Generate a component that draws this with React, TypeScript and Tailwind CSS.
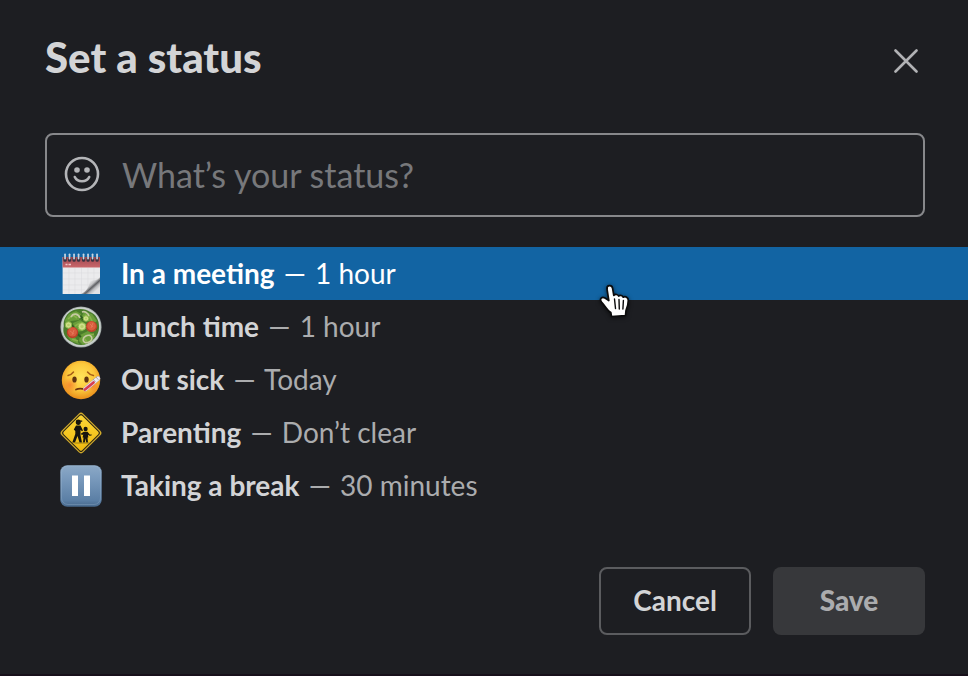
import type { ReactNode } from "react";

function CalendarIcon() {
  return (
    <svg viewBox="0 0 42 42" className="size-[42px]" aria-hidden="true">
      <defs>
        <linearGradient id="cal-red" x1="0" y1="0" x2="0" y2="1">
          <stop offset="0" stopColor="#a04850" />
          <stop offset="1" stopColor="#c9676b" />
        </linearGradient>
        <linearGradient id="cal-curl" gradientUnits="userSpaceOnUse" x1="28" y1="29" x2="36" y2="38">
          <stop offset="0" stopColor="#f4f4f5" />
          <stop offset="0.350" stopColor="#c4c4c6" />
          <stop offset="0.550" stopColor="#5e5f63" />
          <stop offset="0.750" stopColor="#b9babd" />
          <stop offset="1" stopColor="#e2e2e4" />
        </linearGradient>
      </defs>
      <rect x="2.600" y="4" width="37.400" height="37" fill="#ebebed" />
      <rect x="2.600" y="4" width="37.400" height="10.500" fill="url(#cal-red)" />
      <path d="M5.500 11.500h2M8.500 11.500h2.500" stroke="#efc4c6" strokeWidth="1.300" />
      <path
        d="M9 15v26M15 15v26M21.500 15v26M28 15v20M34 15v14M3 20h37M3 26h37M3 32h30M3 37h22"
        stroke="#dcdcdf"
        strokeWidth="0.600"
      />
      <path d="M40 24c-3 4-7 3-10 4-1 7-5 12-10 13h20z" fill="url(#cal-curl)" />
      {[5, 9.5, 14, 18.5, 23.5, 28, 32.5, 37].map((x) => (
        <g key={x}>
          <rect x={x - 1.5} y="4" width="3.200" height="4.800" rx="1.400" fill="#3c3543" />
          <rect x={x - 0.8} y="0.500" width="1.700" height="6" rx="0.800" fill="#c9d6e2" />
        </g>
      ))}
    </svg>
  );
}

function SaladIcon() {
  return (
    <svg viewBox="0 0 42 42" className="size-[42px]" aria-hidden="true">
      <defs>
        <radialGradient id="salad-bowl">
          <stop offset="0.800" stopColor="#97a396" />
          <stop offset="0.920" stopColor="#d0d6d2" />
          <stop offset="1" stopColor="#8e9896" />
        </radialGradient>
      </defs>
      <circle cx="21" cy="21" r="20.600" fill="url(#salad-bowl)" />
      <path
        d="M10 6c5-4 15-4 20 0 6 2 9 8 9 15 0 6-3 11-8 14-5 5-14 5-19 1C5 33 2 27 4 20 3 14 6 9 10 6z"
        fill="#4a7c2b"
      />
      <g fill="#6a9e3a">
        <path d="M9 8l7-3 5 3-2 6-8 1-5 5-1-6zM24 6l8 2 5 7-4 3-7-4-4-4zM13 17l7-3 6 4-3 7-8 1zM7 29l8 2 4 7-8-3zM20 29l8-4 7 5-3 5-9 4-4-4z" />
      </g>
      <path
        d="M8 13l5-4 4 3M25 9l5 2 3 6M15 20l5-3M29 29l5-1M12 33l6 2M23 31l4 5M6 21l5 1"
        stroke="#88b24c"
        strokeWidth="1.600"
        fill="none"
      />
      <path d="M20 10l4 4M15 26l6 5M33 21l4 2M8 17l6 4" stroke="#2f5e20" strokeWidth="2" />
      <g fill="none" stroke="#c6c9a2" strokeWidth="1.700">
        <path d="M11 11c2-4 7-4 9 1" />
        <path d="M22 6c3-1 6 1 7 4" />
        <ellipse cx="27.500" cy="33" rx="4.500" ry="3.500" transform="rotate(-28 27.500 33)" />
      </g>
      <circle cx="31.500" cy="20.500" r="5.600" fill="#bd4429" />
      <circle cx="31.500" cy="20" r="4.400" fill="#d95e3e" />
      <circle cx="12.500" cy="26.500" r="5.700" fill="#bb4028" />
      <circle cx="12.500" cy="26" r="4.500" fill="#d85c3e" />
      <path d="M30 18l3 3M33 17l-2 5M10 25l4 3M14 24l-2 5" stroke="#e67e5d" strokeWidth="0.800" />
      <g fill="#cfe08c" stroke="#8bb74a" strokeWidth="1">
        <circle cx="8.500" cy="19" r="3.200" />
        <circle cx="22" cy="20.500" r="3.800" />
        <circle cx="26" cy="12.500" r="2.800" />
      </g>
      <g fill="#b5cf69">
        <circle cx="8.500" cy="19" r="1.300" />
        <circle cx="22" cy="20.500" r="1.600" />
        <circle cx="26" cy="12.500" r="1" />
      </g>
    </svg>
  );
}

function SickIcon() {
  return (
    <svg viewBox="0 0 42 42" className="size-[42px]" aria-hidden="true">
      <defs>
        <radialGradient id="sick-face" cx="0.500" cy="0.420" r="0.580">
          <stop offset="0" stopColor="#ffe35a" />
          <stop offset="0.600" stopColor="#fcc83c" />
          <stop offset="1" stopColor="#e98d1a" />
        </radialGradient>
        <radialGradient id="sick-cheek">
          <stop offset="0" stopColor="#f5792c" stopOpacity="0.750" />
          <stop offset="1" stopColor="#f5792c" stopOpacity="0" />
        </radialGradient>
      </defs>
      <circle cx="21" cy="21" r="19.200" fill="url(#sick-face)" />
      <circle cx="10" cy="26" r="8" fill="url(#sick-cheek)" />
      <circle cx="33" cy="27" r="6" fill="url(#sick-cheek)" />
      <ellipse cx="14.500" cy="20.500" rx="2.200" ry="3.100" fill="#61330f" />
      <ellipse cx="26.500" cy="20.500" rx="2.200" ry="3.100" fill="#61330f" />
      <path
        d="M8 16.500c2.500-.500 4-1.500 5.500-3.500M27.500 13c1.500 2 3.500 3 6 3.500"
        fill="none"
        stroke="#a65d17"
        strokeWidth="1.400"
        strokeLinecap="round"
      />
      <path d="M16 30.500c3-1.500 6-1 9-.200" fill="none" stroke="#70350f" strokeWidth="1.700" strokeLinecap="round" />
      <path d="M25.500 30L38 19.500" stroke="#b8a7ad" strokeWidth="4.800" strokeLinecap="round" />
      <path d="M25.500 30L38 19.500" stroke="#edebef" strokeWidth="3.800" strokeLinecap="round" />
      <path d="M25 30.500l8.500-7" stroke="#d83d51" strokeWidth="2.800" strokeLinecap="round" />
      <path d="M33 20l2.500 3M36 18l2.300 2.700" stroke="#9c9ba3" strokeWidth="0.900" />
    </svg>
  );
}

function CrossingIcon() {
  return (
    <svg viewBox="0 0 42 42" className="size-[42px]" aria-hidden="true">
      <defs>
        <linearGradient id="sign-yellow" x1="0" y1="0" x2="1" y2="1">
          <stop offset="0" stopColor="#fbd638" />
          <stop offset="1" stopColor="#efb90e" />
        </linearGradient>
      </defs>
      <rect x="5.700" y="5.700" width="30.600" height="30.600" rx="3.200" transform="rotate(45 21 21)" fill="#d3ac2c" />
      <rect x="6.900" y="6.900" width="28.200" height="28.200" rx="2.400" transform="rotate(45 21 21)" fill="#2e2815" />
      <rect x="8" y="8" width="26" height="26" rx="1.600" transform="rotate(45 21 21)" fill="url(#sign-yellow)" />
      <g fill="#16140e">
        <ellipse cx="18.300" cy="10.300" rx="2.500" ry="2.700" />
        <path d="M16 8.600h6.200v1.200H16zM16 13.500h4.500l2.500 5-1 .800-1.500-1.500v5.200l1.500 7.500h-2.500l-2-6.500-2.500 6.500h-2.700l3-8.500v-3l-1.500-1.500z" />
        <ellipse cx="25.600" cy="17" rx="2.100" ry="2.300" />
        <path d="M23.800 19.800h3.700l2.500 3 1.500-.500v1.200l-2 .200-1.500-1 .300 2.800h-.800l.500 5h-1.800l-.500-4-1 4h-1.700l.500-5h-1l.800-3-1.500.500-1-1.200z" />
      </g>
      <path d="M14.500 31h15" stroke="#86701a" strokeWidth="0.800" />
    </svg>
  );
}

function PauseIcon() {
  return (
    <svg viewBox="0 0 42 42" className="size-[42px]" aria-hidden="true">
      <defs>
        <linearGradient id="pause-blue" x1="0" y1="0" x2="0" y2="1">
          <stop offset="0" stopColor="#8ca9c6" />
          <stop offset="0.250" stopColor="#7d9dbf" />
          <stop offset="0.850" stopColor="#5b7fa5" />
          <stop offset="1" stopColor="#46678b" />
        </linearGradient>
      </defs>
      <rect x="0.300" y="0.300" width="41.400" height="41.400" rx="7" fill="url(#pause-blue)" />
      <rect x="1.500" y="1" width="39" height="38.500" rx="6.500" fill="none" stroke="#a7bfd8" strokeOpacity="0.300" />
      <path d="M12 10.500h6v20.500h-6zM24 10.500h6v20.500h-6z" fill="#fff" />
    </svg>
  );
}

function PointerCursor() {
  return (
    <svg
      viewBox="0 0 34 36"
      className="pointer-events-none absolute left-[598px] top-[37px] z-10 h-9 w-[34px] drop-shadow-[0_1px_2px_rgba(0,0,0,0.600)]"
      aria-hidden="true"
    >
      <path
        d="M10.800 16.500L9 5C8.600 1 13.800.400 14.600 4.300L15.800 11.300C17.200 9.900 19.800 10.300 20.600 12C22.200 10.900 24.500 11.500 25.200 13.200C27.500 12 30.300 13.300 30.300 16.500C30.300 20.500 29.500 23 28 26.500L27.500 31.500L13.500 32.500L12.800 28.500C9.500 26.500 7.500 22.500 3.500 18C1 14.700 4 12.200 7 14Z"
        fill="#fff"
        stroke="#0b0b0c"
        strokeWidth="1.700"
        strokeLinejoin="round"
      />
      <path d="M16.500 15l1 9.500M21 15.500l.300 9.500M25.400 16.500l-.500 8.500" stroke="#0b0b0c" strokeWidth="1.400" strokeLinecap="round" />
    </svg>
  );
}

type Preset = { label: string; duration: string; icon: ReactNode };

const presets: Preset[] = [
  { label: "In a meeting", duration: "1 hour", icon: <CalendarIcon /> },
  { label: "Lunch time", duration: "1 hour", icon: <SaladIcon /> },
  { label: "Out sick", duration: "Today", icon: <SickIcon /> },
  { label: "Parenting", duration: "Don’t clear", icon: <CrossingIcon /> },
  { label: "Taking a break", duration: "30 minutes", icon: <PauseIcon /> },
];

export default function App() {
  return (
    <main className="flex min-h-screen flex-col border-b-2 border-[#17101a] bg-[#1d1e22] font-[Lato,sans-serif] text-[#d3d4d6]">
      <header className="flex items-end justify-between pl-[45px] pr-9 pt-[27px]">
        <h1 className="text-[42px] font-black leading-[60px]">Set a status</h1>
        <button type="button" aria-label="Close" className="flex size-[52px] items-center justify-center text-[#b1b2b5]">
          <svg viewBox="0 0 24 24" className="size-6" fill="none" stroke="currentColor" strokeWidth="2.600" strokeLinecap="round" aria-hidden="true">
            <path d="M1.500 1.500l21 21M22.500 1.500l-21 21" />
          </svg>
        </button>
      </header>

      <div className="ml-[45px] mr-[43px] mt-[46px] flex h-[84px] items-center gap-[22px] rounded-lg border-2 border-[#87888b] px-[17px]">
        <button type="button" aria-label="Choose an emoji" className="shrink-0 pb-0.5 text-[#b4b5b8]">
          <svg viewBox="0 0 36 36" className="size-9" fill="none" stroke="currentColor" aria-hidden="true">
            <circle cx="18" cy="18" r="16" strokeWidth="2.600" />
            <circle cx="13" cy="14" r="2.800" fill="currentColor" stroke="none" />
            <circle cx="23" cy="14" r="2.800" fill="currentColor" stroke="none" />
            <path d="M10.800 21c2.600 5.600 11.800 5.600 14.400 0" strokeWidth="2.600" strokeLinecap="round" />
          </svg>
        </button>
        <input
          type="text"
          aria-label="Status"
          placeholder="What’s your status?"
          className="min-w-0 flex-1 bg-transparent text-[34px] leading-[44px] outline-none placeholder:text-[#77787b]"
        />
      </div>

      <ul className="relative mt-[30px]">
        {presets.map((preset, index) => (
          <li key={preset.label}>
            <button
              type="button"
              className={`flex h-[53px] w-full items-center gap-[19px] px-[60px] text-left text-[28px] leading-9 ${
                index === 0 ? "bg-[#1264a3] text-white" : "text-[#abacae]"
              }`}
            >
              {preset.icon}
              <span className="pb-0.5">
                <strong className={`font-bold ${index === 0 ? "text-white" : "text-[#d3d4d6]"}`}>{preset.label}</strong>{" "}
                <span className="mx-0.5">—</span> {preset.duration}
              </span>
            </button>
          </li>
        ))}
        <PointerCursor />
      </ul>

      <footer className="mt-[55px] flex justify-end gap-[22px] pb-[39px] pr-[43px]">
        <button type="button" className="h-[68px] w-[152px] rounded-lg border-2 border-[#5b5c5f] pb-0.5 text-[28px] font-bold leading-9">
          Cancel
        </button>
        <button type="button" disabled className="h-[68px] w-[152px] rounded-lg bg-[#37383b] pb-0.5 text-[28px] font-black leading-9 text-[#abacae]">
          Save
        </button>
      </footer>
    </main>
  );
}
